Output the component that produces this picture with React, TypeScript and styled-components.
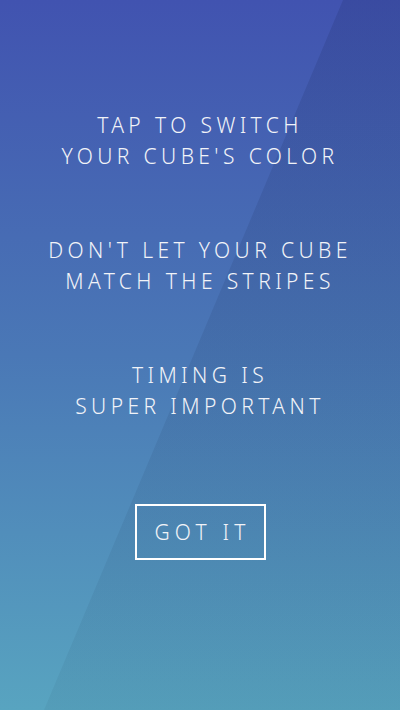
import React from "react";
import styled, { createGlobalStyle } from "styled-components";

const Global = createGlobalStyle`
  html, body { margin: 0; padding: 0; }
  body { width: 400px; height: 710px; overflow: hidden; }
`;

const Screen = styled.div`
  position: relative;
  width: 400px;
  height: 710px;
  overflow: hidden;
  background: linear-gradient(180deg, #4153b0 0%, #4a78b6 50%, #58a4c0 100%);
  display: flex;
  flex-direction: column;
  align-items: center;
  padding-top: 110px;
  box-sizing: border-box;
  font-family: "Noto Sans", "DejaVu Sans", sans-serif;
  color: #f1f3f8;

  &::before {
    content: "";
    position: absolute;
    inset: 0;
    background: linear-gradient(180deg, rgba(10, 20, 60, 0.13) 0%, rgba(10, 30, 50, 0.05) 100%);
    clip-path: polygon(343px 0, 400px 0, 400px 710px, 44px 710px);
    pointer-events: none;
  }
`;

const Content = styled.div`
  position: relative;
  z-index: 1;
  display: flex;
  flex-direction: column;
  align-items: center;
  gap: 63px;
`;

const Tip = styled.p`
  margin: 0;
  font-size: 21px;
  line-height: 31px;
  letter-spacing: 4.4px;
  text-align: center;
  font-weight: 300;
  text-transform: uppercase;
  white-space: nowrap;
`;

const Button = styled.button`
  position: relative;
  z-index: 1;
  margin-top: 82px;
  width: 131px;
  height: 56px;
  box-sizing: border-box;
  background: transparent;
  border: 2px solid #ffffff;
  color: #f1f3f8;
  font-family: "Noto Sans", "DejaVu Sans", sans-serif;
  font-size: 21px;
  font-weight: 300;
  letter-spacing: 5.2px;
  padding: 0 0 0 5px;
  cursor: pointer;
`;

const tips = [
  ["Tap to switch", "your cube's color"],
  ["Don't let your cube", "match the stripes"],
  ["Timing is", "super important"],
];

export default function App() {
  return (
    <>
      <Global />
      <Screen>
        <Content>
          {tips.map((lines, i) => (
            <Tip key={i}>
              {lines[0]}
              <br />
              {lines[1]}
            </Tip>
          ))}
        </Content>
        <Button>GOT IT</Button>
      </Screen>
    </>
  );
}
